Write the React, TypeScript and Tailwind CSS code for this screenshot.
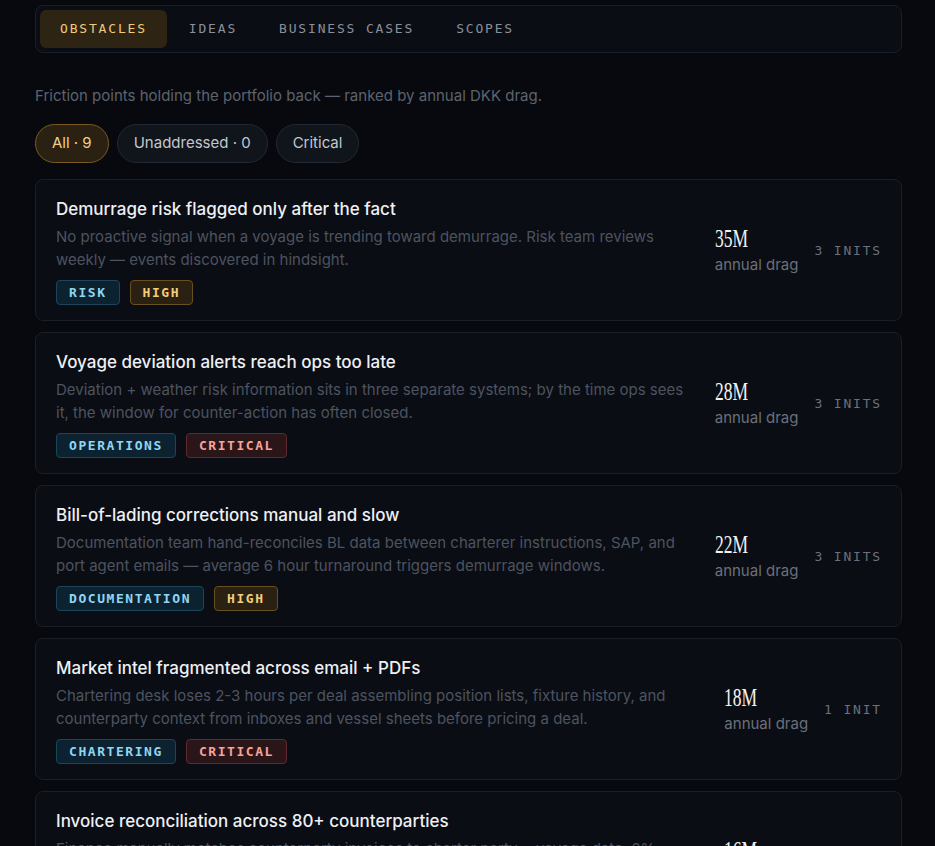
import React from 'react';

type Tone = 'dept' | 'high' | 'critical';

type Obstacle = {
  title: string;
  body: string;
  dept: string;
  severity: 'HIGH' | 'CRITICAL';
  drag: string;
  inits: number;
};

const TABS = ['OBSTACLES', 'IDEAS', 'BUSINESS CASES', 'SCOPES'];

const OBSTACLES: Obstacle[] = [
  {
    title: 'Demurrage risk flagged only after the fact',
    body: 'No proactive signal when a voyage is trending toward demurrage. Risk team reviews weekly — events discovered in hindsight.',
    dept: 'RISK',
    severity: 'HIGH',
    drag: '35M',
    inits: 3,
  },
  {
    title: 'Voyage deviation alerts reach ops too late',
    body: 'Deviation + weather risk information sits in three separate systems; by the time ops sees it, the window for counter-action has often closed.',
    dept: 'OPERATIONS',
    severity: 'CRITICAL',
    drag: '28M',
    inits: 3,
  },
  {
    title: 'Bill-of-lading corrections manual and slow',
    body: 'Documentation team hand-reconciles BL data between charterer instructions, SAP, and port agent emails — average 6 hour turnaround triggers demurrage windows.',
    dept: 'DOCUMENTATION',
    severity: 'HIGH',
    drag: '22M',
    inits: 3,
  },
  {
    title: 'Market intel fragmented across email + PDFs',
    body: 'Chartering desk loses 2-3 hours per deal assembling position lists, fixture history, and counterparty context from inboxes and vessel sheets before pricing a deal.',
    dept: 'CHARTERING',
    severity: 'CRITICAL',
    drag: '18M',
    inits: 1,
  },
  {
    title: 'Invoice reconciliation across 80+ counterparties',
    body: 'Finance manually matches counterparty invoices to charter party + voyage data. 6% historic error rate leaks margin through overpayments and missed claims.',
    dept: 'FINANCE',
    severity: 'HIGH',
    drag: '16M',
    inits: 1,
  },
];

const TAG_STYLES: Record<Tone, string> = {
  dept: 'bg-[#0d2230] border-[#1b4558] text-[#8fd6f2]',
  high: 'bg-[#2a2112] border-[#6a4f1f] text-[#f4cd7c]',
  critical: 'bg-[#2a1619] border-[#62292d] text-[#f7a39b]',
};

const mono = "font-['DejaVu_Sans_Mono','Liberation_Mono',monospace]";

function Tag({ label, tone }: { label: string; tone: Tone }) {
  return (
    <span
      className={`inline-flex h-[25px] items-center rounded-[4px] border px-3 text-[13px] font-bold tracking-[0.12em] ${mono} ${TAG_STYLES[tone]}`}
    >
      {label}
    </span>
  );
}

function ObstacleCard({ item }: { item: Obstacle }) {
  return (
    <div className="flex items-center gap-4 rounded-lg border border-[#1a1e27] bg-[#0a0d13] pt-[17px] pr-[19px] pb-[15px] pl-5">
      <div className="min-w-0 flex-1">
        <h3 className="text-[17px] leading-6 font-medium text-[#eef0f3]">{item.title}</h3>
        <p className="mt-1 text-[15px] leading-[23px] text-[#4d5360]">{item.body}</p>
        <div className="mt-[9px] flex gap-[10px]">
          <Tag label={item.dept} tone="dept" />
          <Tag label={item.severity} tone={item.severity === 'HIGH' ? 'high' : 'critical'} />
        </div>
      </div>
      <div className="flex items-center gap-4">
        <div>
          <div className="origin-left scale-x-[0.7] font-['Liberation_Serif',serif] text-[25px] leading-6 text-[#f2f2f0]">
            {item.drag}
          </div>
          <div className="mt-1 text-[15px] leading-5 text-[#6a707b]">annual drag</div>
        </div>
        <span className={`text-[13px] tracking-[0.14em] text-[#6b717c] ${mono}`}>
          {item.inits} {item.inits === 1 ? 'INIT' : 'INITS'}
        </span>
      </div>
    </div>
  );
}

export default function App() {
  const active = 'OBSTACLES';

  return (
    <div className="min-h-screen bg-[#07090e] pt-[5px] pr-[33px] pl-[35px] pb-10 font-['Inter','Noto_Sans',sans-serif]">
      {/* section tabs */}
      <div className="flex gap-[2px] rounded-lg border border-[#1a1e27] bg-[#0a0d13] p-1">
        {TABS.map(tab => (
          <button
            key={tab}
            className={`h-[38px] rounded-md px-5 text-[13px] tracking-[0.14em] ${mono} ${
              tab === active ? 'bg-[#2d2414] text-[#f1c97a]' : 'text-[#8a909b]'
            }`}
          >
            {tab}
          </button>
        ))}
      </div>

      <p className="mt-[33px] text-[15px] leading-5 text-[#5d636e]">
        Friction points holding the portfolio back — ranked by annual DKK drag.
      </p>

      {/* filters */}
      <div className="mt-[18px] flex gap-2">
        <button className="h-[39px] rounded-full border border-[#7a5a22] bg-[#2a2112] px-4 text-[15px] text-[#f3d08a]">
          All · 9
        </button>
        <button className="h-[39px] rounded-full border border-[#232833] bg-[#10141b] px-4 text-[15px] text-[#c3c7ce]">
          Unaddressed · 0
        </button>
        <button className="h-[39px] rounded-full border border-[#232833] bg-[#10141b] px-4 text-[15px] text-[#c3c7ce]">
          Critical
        </button>
      </div>

      <div className="mt-4 flex flex-col gap-[11px]">
        {OBSTACLES.map(item => (
          <ObstacleCard key={item.title} item={item} />
        ))}
      </div>
    </div>
  );
}
